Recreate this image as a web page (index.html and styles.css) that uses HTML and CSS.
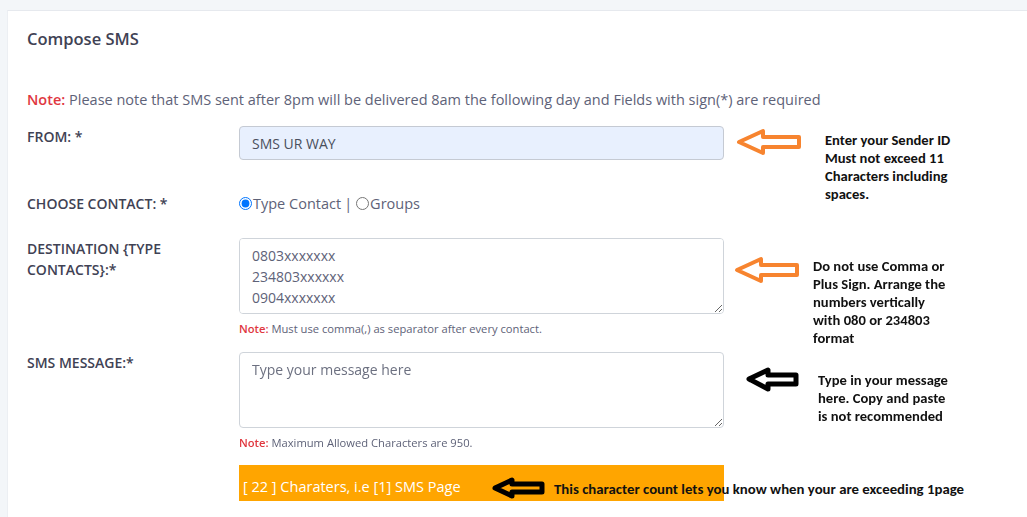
FILE: index.html
```html
<!DOCTYPE html>
<html lang="en">
<head>
    <meta charset="UTF-8">
    <meta name="viewport" content="width=device-width, initial-scale=1.0">
    <title>Compose SMS</title>
    <link rel="stylesheet" href="styles.css">
</head>
<body>
    <div class="card">
        <h3 class="card-title">Compose SMS</h3>

        <p class="note-main"><span class="note">Note:</span> Please note that SMS sent after 8pm will be delivered 8am the following day and Fields with sign(*) are required</p>

        <div class="form-row row-from">
            <label class="label">FROM: *</label>
            <div class="field">
                <input type="text" class="input autofill" value="SMS UR WAY">
            </div>
            <div class="hint hint-from">
                <svg class="arrow" width="66" height="28" viewBox="0 0 66 28">
                    <path d="M3 14 L27 3 L27 9 L63 9 L63 19 L27 19 L27 25 Z" fill="#fff" stroke="#f7842f" stroke-width="4" stroke-linejoin="round"/>
                </svg>
                <p class="hint-text">Enter your Sender ID<br>Must not exceed 11<br>Characters including<br>spaces.</p>
            </div>
        </div>

        <div class="form-row row-contact">
            <label class="label">CHOOSE CONTACT: *</label>
            <div class="field radios">
                <input type="radio" name="ctype" id="typec" checked><label for="typec">Type Contact</label>
                <span class="sep">|</span>
                <input type="radio" name="ctype" id="groups"><label for="groups">Groups</label>
            </div>
        </div>

        <div class="form-row row-dest">
            <label class="label">DESTINATION {TYPE<br>CONTACTS}:*</label>
            <div class="field">
                <textarea class="input area">0803xxxxxxx
234803xxxxxx
0904xxxxxxx</textarea>
                <p class="small-note"><span class="note">Note:</span> Must use comma(,) as separator after every contact.</p>
            </div>
            <div class="hint hint-dest">
                <svg class="arrow" width="66" height="28" viewBox="0 0 66 28">
                    <path d="M3 14 L27 3 L27 9 L63 9 L63 19 L27 19 L27 25 Z" fill="#fff" stroke="#f7842f" stroke-width="4" stroke-linejoin="round"/>
                </svg>
                <p class="hint-text">Do not use Comma or<br>Plus Sign. Arrange the<br>numbers vertically<br>with 080 or 234803<br>format</p>
            </div>
        </div>

        <div class="form-row row-msg">
            <label class="label">SMS MESSAGE:*</label>
            <div class="field">
                <textarea class="input area" placeholder="Type your message here"></textarea>
                <p class="small-note"><span class="note">Note:</span> Maximum Allowed Characters are 950.</p>
            </div>
            <div class="hint hint-msg">
                <svg class="arrow" width="54" height="26" viewBox="0 0 54 26">
                    <path d="M3 12 L22 3 L22 8 L50 8 L50 17 L22 17 L22 22 Z" fill="#fff" stroke="#000" stroke-width="5" stroke-linejoin="round"/>
                </svg>
                <p class="hint-text">Type in your message<br>here. Copy and paste<br>is not recommended</p>
            </div>
        </div>

        <div class="form-row row-count">
            <div></div>
            <div class="field">
                <div class="counter">[ 22 ] Charaters, i.e [1] SMS Page</div>
            </div>
            <div class="hint hint-count">
                <svg class="arrow" width="54" height="24" viewBox="0 0 54 24">
                    <path d="M3 11 L20 3 L20 7 L50 7 L50 15 L20 15 L20 19 Z" fill="#ffa500" stroke="#000" stroke-width="5" stroke-linejoin="round"/>
                </svg>
                <p class="hint-text">This character count lets you know when your are exceeding 1page</p>
            </div>
        </div>
    </div>
</body>
</html>
```

FILE: styles.css
```css
body {
    margin: 0;
    background-color: #f3f6f9;
    font-family: "Open Sans", "Noto Sans", sans-serif;
    color: #5e6278;
    font-size: 14.5px;
    overflow: hidden;
}
.card {
    margin: 10px 0 0 7px;
    background: #fff;
    border-top: 1px solid #e6e9ee;
    border-left: 1px solid #eceff3;
    padding: 16px 0 40px 19px;
    min-height: 520px;
}
.card-title {
    margin: 0;
    font-size: 16.5px;
    font-weight: 600;
    line-height: 24px;
    color: #3f4254;
}
.note-main {
    margin: 38px 0 16px;
    line-height: 21px;
}
.note {
    color: #e0373f;
    font-weight: 600;
}
.form-row {
    position: relative;
    display: grid;
    grid-template-columns: 212px 485px;
    align-items: start;
}
.label {
    color: #3f4254;
    font-weight: 600;
    font-size: 14px;
    line-height: 21px;
}
.row-from {
    margin-bottom: 33px;
}
.row-contact {
    margin-bottom: 24px;
}
.row-dest {
    margin-bottom: 15px;
}
.row-msg {
    margin-bottom: 14px;
}
.input {
    display: block;
    box-sizing: border-box;
    width: 100%;
    border: 1px solid #cfd4da;
    border-radius: 4px;
    font-family: "Open Sans", "Noto Sans", sans-serif;
    font-size: 14px;
    color: #4a4f5c;
    margin: 0;
}
.autofill {
    height: 34px;
    padding: 0 12px;
    background: #e8f0fe;
    border-color: #c5cad3;
}
.area {
    height: 76px;
    padding: 6px 12px;
    line-height: 21px;
    resize: vertical;
    background: #fff;
    color: #5e6278;
}
.area::placeholder {
    color: #6c7080;
}
.radios {
    display: flex;
    align-items: center;
    line-height: 21px;
    color: #5e6278;
}
.radios input {
    margin: 0 1px 0 0;
    width: 13px;
    height: 13px;
}
.sep {
    margin: 0 4px 0 3px;
}
.small-note {
    margin: 7px 0 0;
    font-size: 11.2px;
    line-height: 16px;
}
.counter {
    background: #ffa500;
    color: #fff;
    height: 36px;
    box-sizing: border-box;
    padding: 11px 0 0 4px;
    line-height: 21px;
}
.hint {
    position: absolute;
    display: flex;
    align-items: flex-start;
}
.hint-text {
    margin: 0;
    font-family: "Carlito", "Liberation Sans Narrow", "DejaVu Sans Condensed", sans-serif;
    font-weight: bold;
    font-size: 14.6px;
    line-height: 18px;
    color: #111;
}
.hint-from {
    left: 709px;
    top: 2px;
}
.hint-from .hint-text {
    margin: 3px 0 0 23px;
}
.hint-dest {
    left: 707px;
    top: 18px;
}
.hint-dest .hint-text {
    margin: 1px 0 0 13px;
}
.hint-msg {
    left: 719px;
    top: 15px;
}
.hint-msg .hint-text {
    margin: 4px 0 0 18px;
}
.hint-count {
    left: 465px;
    top: 12px;
    align-items: center;
}
.hint-count .hint-text {
    margin-left: 8px;
    font-size: 14.8px;
    white-space: nowrap;
}
```
